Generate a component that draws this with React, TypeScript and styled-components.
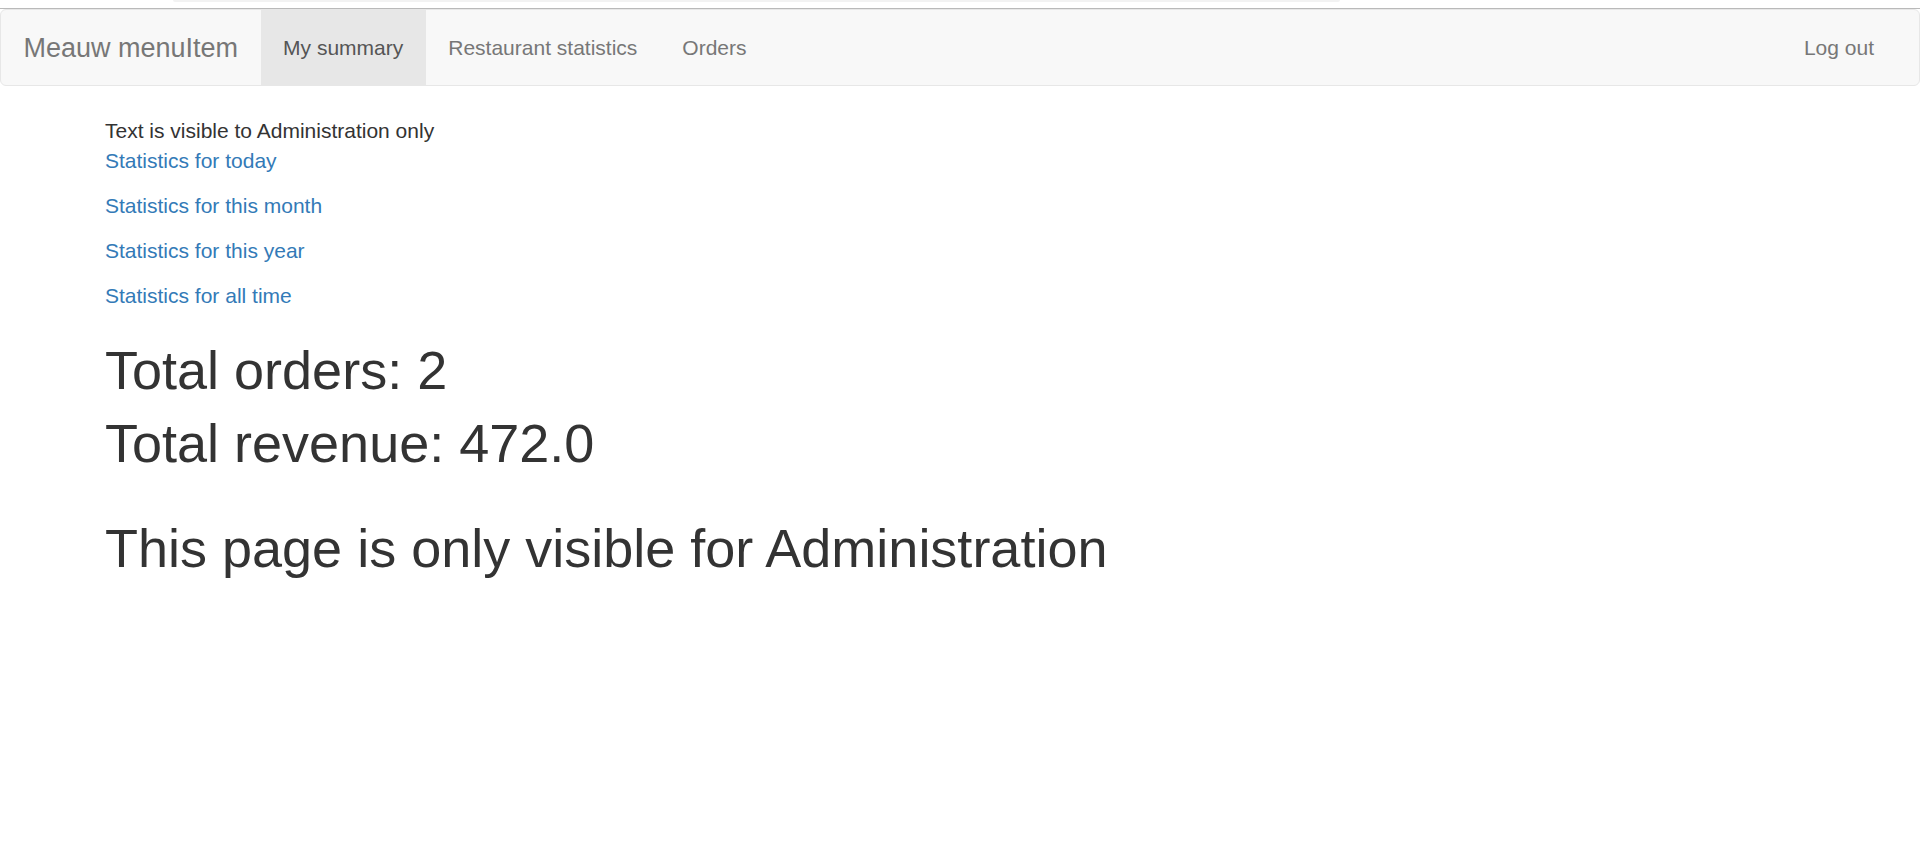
import React from "react";
import styled, { createGlobalStyle } from "styled-components";

const GlobalStyle = createGlobalStyle`
  html, body {
    margin: 0;
    padding: 0;
    background: #fff;
  }
  body {
    font-family: "Liberation Sans", Arial, Helvetica, sans-serif;
    font-size: 21px;
    line-height: 30px;
    color: #333;
  }
`;

const TopStrip = styled.div`
  height: 8px;
  border-bottom: 1px solid #b9b9b9;
  background: #fff;
`;

const TopTab = styled.div`
  margin-left: 173px;
  width: 1167px;
  height: 2px;
  background: #f2f2f2;
  border-radius: 0 0 6px 6px;
`;

const Navbar = styled.nav`
  display: flex;
  align-items: stretch;
  min-height: 75px;
  padding: 0 22.5px;
  background: #f8f8f8;
  border: 1.5px solid #e7e7e7;
  border-radius: 6px;
  margin-bottom: 30px;
`;

const Brand = styled.a`
  display: block;
  margin-left: -22.5px;
  padding: 22.5px;
  font-size: 27px;
  line-height: 30px;
  color: #777;
  text-decoration: none;
`;

const NavList = styled.ul<{ right?: boolean }>`
  display: flex;
  list-style: none;
  margin: 0;
  padding: 0;
  margin-left: ${(p) => (p.right ? "auto" : "0")};
`;

const NavLink = styled.a<{ active?: boolean }>`
  display: block;
  padding: 22.5px;
  font-size: 21px;
  line-height: 30px;
  color: ${(p) => (p.active ? "#555" : "#777")};
  background: ${(p) => (p.active ? "#e7e7e7" : "transparent")};
  text-decoration: none;
`;

const Container = styled.main`
  padding-left: 105px;
`;

const Note = styled.div`
  color: #333;
`;

const LinkPara = styled.p`
  margin: 0 0 15px;
`;

const StatLink = styled.a`
  color: #337ab7;
  text-decoration: none;
`;

const Heading = styled.h1<{ top: number; bottom?: number }>`
  font-size: 54px;
  font-weight: 500;
  line-height: 1.1;
  color: #333;
  margin: ${(p) => p.top}px 0 ${(p) => p.bottom ?? 0}px;
`;

const links = [
  "Statistics for today",
  "Statistics for this month",
  "Statistics for this year",
  "Statistics for all time",
];

export default function App() {
  return (
    <>
      <GlobalStyle />
      <TopStrip>
        <TopTab />
      </TopStrip>
      <Navbar>
        <Brand href="#">Meauw menuItem</Brand>
        <NavList>
          <li>
            <NavLink href="#" active>
              My summary
            </NavLink>
          </li>
          <li>
            <NavLink href="#">Restaurant statistics</NavLink>
          </li>
          <li>
            <NavLink href="#">Orders</NavLink>
          </li>
        </NavList>
        <NavList right>
          <li>
            <NavLink href="#">Log out</NavLink>
          </li>
        </NavList>
      </Navbar>
      <Container>
        <Note>Text is visible to Administration only</Note>
        {links.map((l) => (
          <LinkPara key={l}>
            <StatLink href="#">{l}</StatLink>
          </LinkPara>
        ))}
        <Heading top={30}>Total orders: 2</Heading>
        <Heading top={14}>Total revenue: 472.0</Heading>
        <Heading top={45}>This page is only visible for Administration</Heading>
      </Container>
    </>
  );
}
